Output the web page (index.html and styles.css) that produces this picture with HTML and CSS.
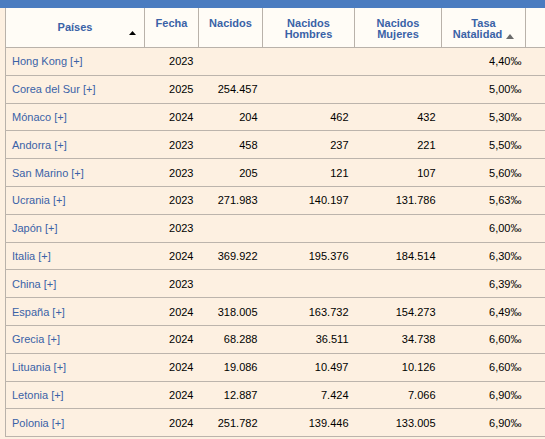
FILE: index.html
```html
<!DOCTYPE html>
<html lang="es">
<head>
<meta charset="utf-8">
<title>Tasa de natalidad</title>
<link rel="stylesheet" href="styles.css">
</head>
<body>
<div class="topbar"></div>
<div class="wrap">
<table class="tbl">
<colgroup>
<col class="c-pais"><col class="c-fecha"><col class="c-nac"><col class="c-hom"><col class="c-muj"><col class="c-tasa"><col class="c-extra">
</colgroup>
<thead>
<tr>
<th class="th-pais">Países<svg class="arrow-pais" width="7" height="4" viewBox="0 0 7 4"><polygon points="0,4 7,4 3.5,0" fill="#000"/></svg></th>
<th>Fecha</th>
<th>Nacidos</th>
<th>Nacidos<br>Hombres</th>
<th>Nacidos<br>Mujeres</th>
<th>Tasa<br>Natalidad <svg class="arrow-tasa" width="8" height="5" viewBox="0 0 8 5"><polygon points="0,5 8,5 4,0" fill="#6b6b6b"/></svg></th>
<th class="th-extra"></th>
</tr>
</thead>
<tbody>
<tr><td class="pais">Hong Kong [+]</td><td>2023</td><td></td><td></td><td></td><td>4,40‰</td><td></td></tr>
<tr><td class="pais">Corea del Sur [+]</td><td>2025</td><td>254.457</td><td></td><td></td><td>5,00‰</td><td></td></tr>
<tr><td class="pais">Mónaco [+]</td><td>2024</td><td>204</td><td>462</td><td>432</td><td>5,30‰</td><td></td></tr>
<tr><td class="pais">Andorra [+]</td><td>2023</td><td>458</td><td>237</td><td>221</td><td>5,50‰</td><td></td></tr>
<tr><td class="pais">San Marino [+]</td><td>2023</td><td>205</td><td>121</td><td>107</td><td>5,60‰</td><td></td></tr>
<tr><td class="pais">Ucrania [+]</td><td>2023</td><td>271.983</td><td>140.197</td><td>131.786</td><td>5,63‰</td><td></td></tr>
<tr><td class="pais">Japón [+]</td><td>2023</td><td></td><td></td><td></td><td>6,00‰</td><td></td></tr>
<tr><td class="pais">Italia [+]</td><td>2024</td><td>369.922</td><td>195.376</td><td>184.514</td><td>6,30‰</td><td></td></tr>
<tr><td class="pais">China [+]</td><td>2023</td><td></td><td></td><td></td><td>6,39‰</td><td></td></tr>
<tr><td class="pais">España [+]</td><td>2024</td><td>318.005</td><td>163.732</td><td>154.273</td><td>6,49‰</td><td></td></tr>
<tr><td class="pais">Grecia [+]</td><td>2024</td><td>68.288</td><td>36.511</td><td>34.738</td><td>6,60‰</td><td></td></tr>
<tr><td class="pais">Lituania [+]</td><td>2024</td><td>19.086</td><td>10.497</td><td>10.126</td><td>6,60‰</td><td></td></tr>
<tr><td class="pais">Letonia [+]</td><td>2024</td><td>12.887</td><td>7.424</td><td>7.066</td><td>6,90‰</td><td></td></tr>
<tr><td class="pais">Polonia [+]</td><td>2024</td><td>251.782</td><td>139.446</td><td>133.005</td><td>6,90‰</td><td></td></tr>
</tbody>
</table>
</div>
</body>
</html>
```

FILE: styles.css
```css
html, body {
  margin: 0;
  padding: 0;
  background: #fdf0e1;
  overflow: hidden;
  font-family: "Liberation Sans", Arial, sans-serif;
}

.topbar {
  height: 8px;
  background: #4a7cc0;
}

.wrap {
  padding-left: 5px;
  width: 700px;
}

.tbl {
  border-collapse: collapse;
  table-layout: fixed;
  width: 640px;
  font-size: 11px;
  border-left: 1px solid #b9b2aa;
}

.c-pais { width: 139px; }
.c-fecha { width: 54px; }
.c-nac { width: 64px; }
.c-hom { width: 92px; }
.c-muj { width: 87px; }
.c-tasa { width: 84px; }
.c-extra { width: 120px; }

.tbl th {
  background: #fffcf6;
  color: #3a62a7;
  font-weight: bold;
  font-size: 11px;
  line-height: 11px;
  vertical-align: top;
  text-align: center;
  height: 29px;
  padding: 10px 2px 0 2px;
  border-right: 1px solid #b9b2aa;
  border-bottom: 1px solid #b9b2aa;
}

.tbl th.th-extra {
  border-right: none;
}

.tbl th.th-pais {
  vertical-align: middle;
  padding: 0;
  position: relative;
}

.arrow-pais {
  position: absolute;
  left: 123px;
  top: 23px;
}

.arrow-tasa {
  vertical-align: -1px;
  margin-left: 1px;
}

.tbl td {
  height: 26.8px;
  padding: 0 5px;
  border-bottom: 1px solid #bcb4ac;
  text-align: right;
  color: #000;
  vertical-align: middle;
  white-space: nowrap;
}

.tbl td.pais {
  text-align: left;
  padding-left: 6px;
  color: #3a62a7;
}

.tbl td:nth-child(4),
.tbl td:nth-child(5) {
  padding-right: 6px;
}

.tbl td:nth-child(6) {
  padding-right: 4px;
}
```
